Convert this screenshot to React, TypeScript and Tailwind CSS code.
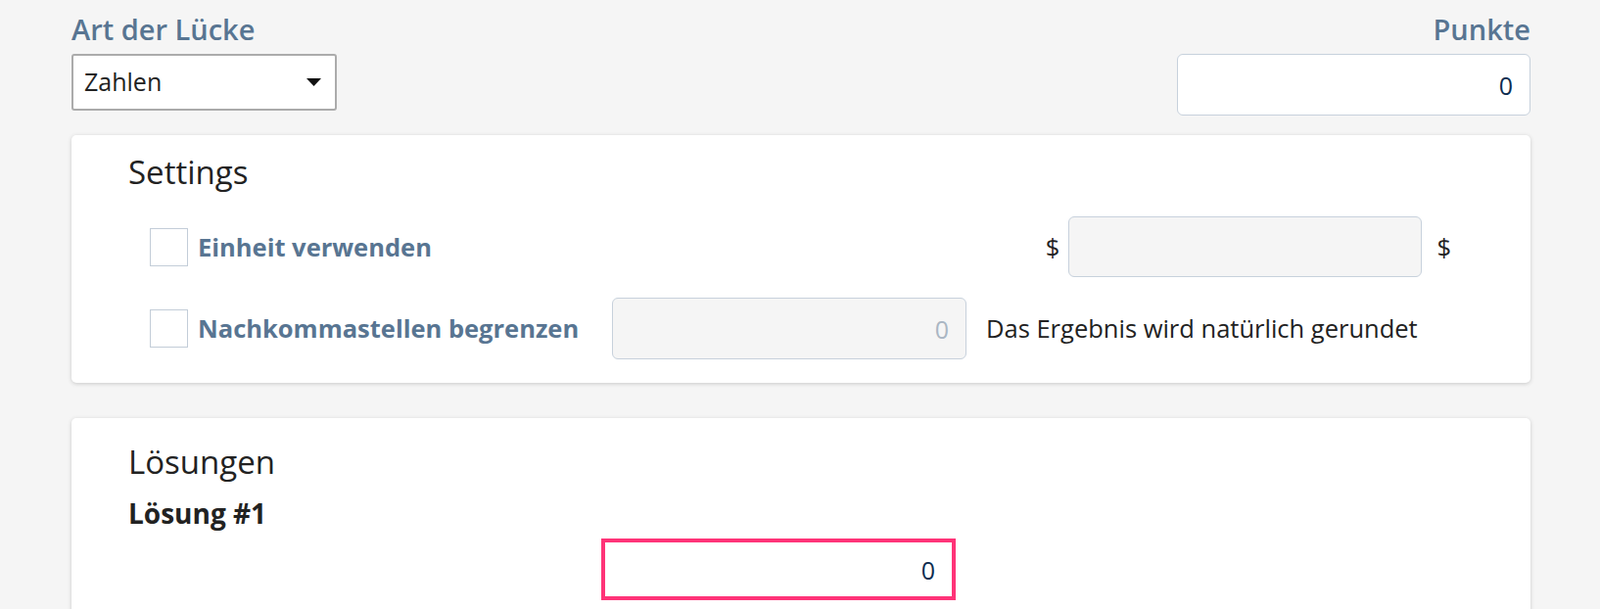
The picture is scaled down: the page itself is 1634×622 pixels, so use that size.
import React from "react";

const label = "text-[#587592]";

function Checkbox() {
  return <div className="w-[39px] h-[39px] shrink-0 border border-[#c3cdd8] bg-white" />;
}

export default function App() {
  return (
    <div
      className="min-h-[622px] bg-[#f5f5f5] pl-[73px] pr-[71px] pt-[10px] text-[25.5px] text-[#222]"
      style={{ fontFamily: '"Open Sans", "Noto Sans", sans-serif' }}
    >
      {/* top row */}
      <div className="flex justify-between items-start">
        <div className="flex flex-col">
          <div className={`text-[29px] leading-[40px] font-semibold ${label}`}>Art der Lücke</div>
          <div className="mt-[5px] w-[271px] h-[58px] border-2 border-[#ababab] rounded-[3px] bg-white flex items-center justify-between pl-[11px] pr-[14px]">
            <span className="text-[25px] text-[#222]">Zahlen</span>
            <svg width="15" height="8" viewBox="0 0 15 8">
              <path d="M0 0 L15 0 L7.5 8 Z" fill="#111" />
            </svg>
          </div>
        </div>
        <div className="flex flex-col items-end">
          <div className={`text-[29px] leading-[40px] font-semibold ${label}`}>Punkte</div>
          <input
            readOnly
            value="0"
            className="mt-[5px] w-[361px] h-[63px] border border-[#c7d1dc] rounded-[6px] bg-white text-right pr-[17px] text-[25px] text-[#0d2c4f] outline-none"
          />
        </div>
      </div>

      {/* settings */}
      <div className="mt-[20px] bg-white rounded-[5px] shadow-[0_1px_4px_rgba(0,0,0,0.18)] pl-[58px] pt-[19px] pb-[24px]">
        <h2 className="text-[33px] leading-[38px] text-[#222]">Settings</h2>
        <div className="mt-[26px] pl-[22px]">
          <div className="flex items-center h-[62px]">
            <Checkbox />
            <span className={`ml-[10px] font-bold ${label}`}>Einheit verwenden</span>
            <div className="ml-auto mr-[81px] flex items-center">
              <span>$</span>
              <div className="ml-[9px] w-[361px] h-[62px] border border-[#c7d1dc] rounded-[6px] bg-[#f5f5f5]" />
              <span className="ml-[15px]">$</span>
            </div>
          </div>
          <div className="flex items-center h-[63px] mt-[21px]">
            <Checkbox />
            <span className={`ml-[10px] w-[423px] font-bold ${label}`}>Nachkommastellen begrenzen</span>
            <input
              readOnly
              value="0"
              className="w-[362px] h-[63px] border border-[#c7d1dc] rounded-[6px] bg-[#f5f5f5] text-right pr-[17px] text-[25px] text-[#aab6c3] outline-none"
            />
            <span className="ml-[20px]">Das Ergebnis wird natürlich gerundet</span>
          </div>
        </div>
      </div>

      {/* solutions */}
      <div className="mt-[36px] bg-white rounded-[5px] shadow-[0_1px_4px_rgba(0,0,0,0.18)] pl-[58px] pt-[26px] pb-[40px]">
        <h2 className="text-[33px] leading-[38px] text-[#222]">Lösungen</h2>
        <div className="mt-[16px] text-[28px] leading-[34px] font-bold text-[#222]">Lösung #1</div>
        <input
          readOnly
          value="0"
          className="mt-[9px] ml-[483px] block w-[362px] h-[63px] border-4 border-[#ff3378] bg-white text-right pr-[17px] text-[25px] text-[#0d2c4f] outline-none"
        />
      </div>
    </div>
  );
}
